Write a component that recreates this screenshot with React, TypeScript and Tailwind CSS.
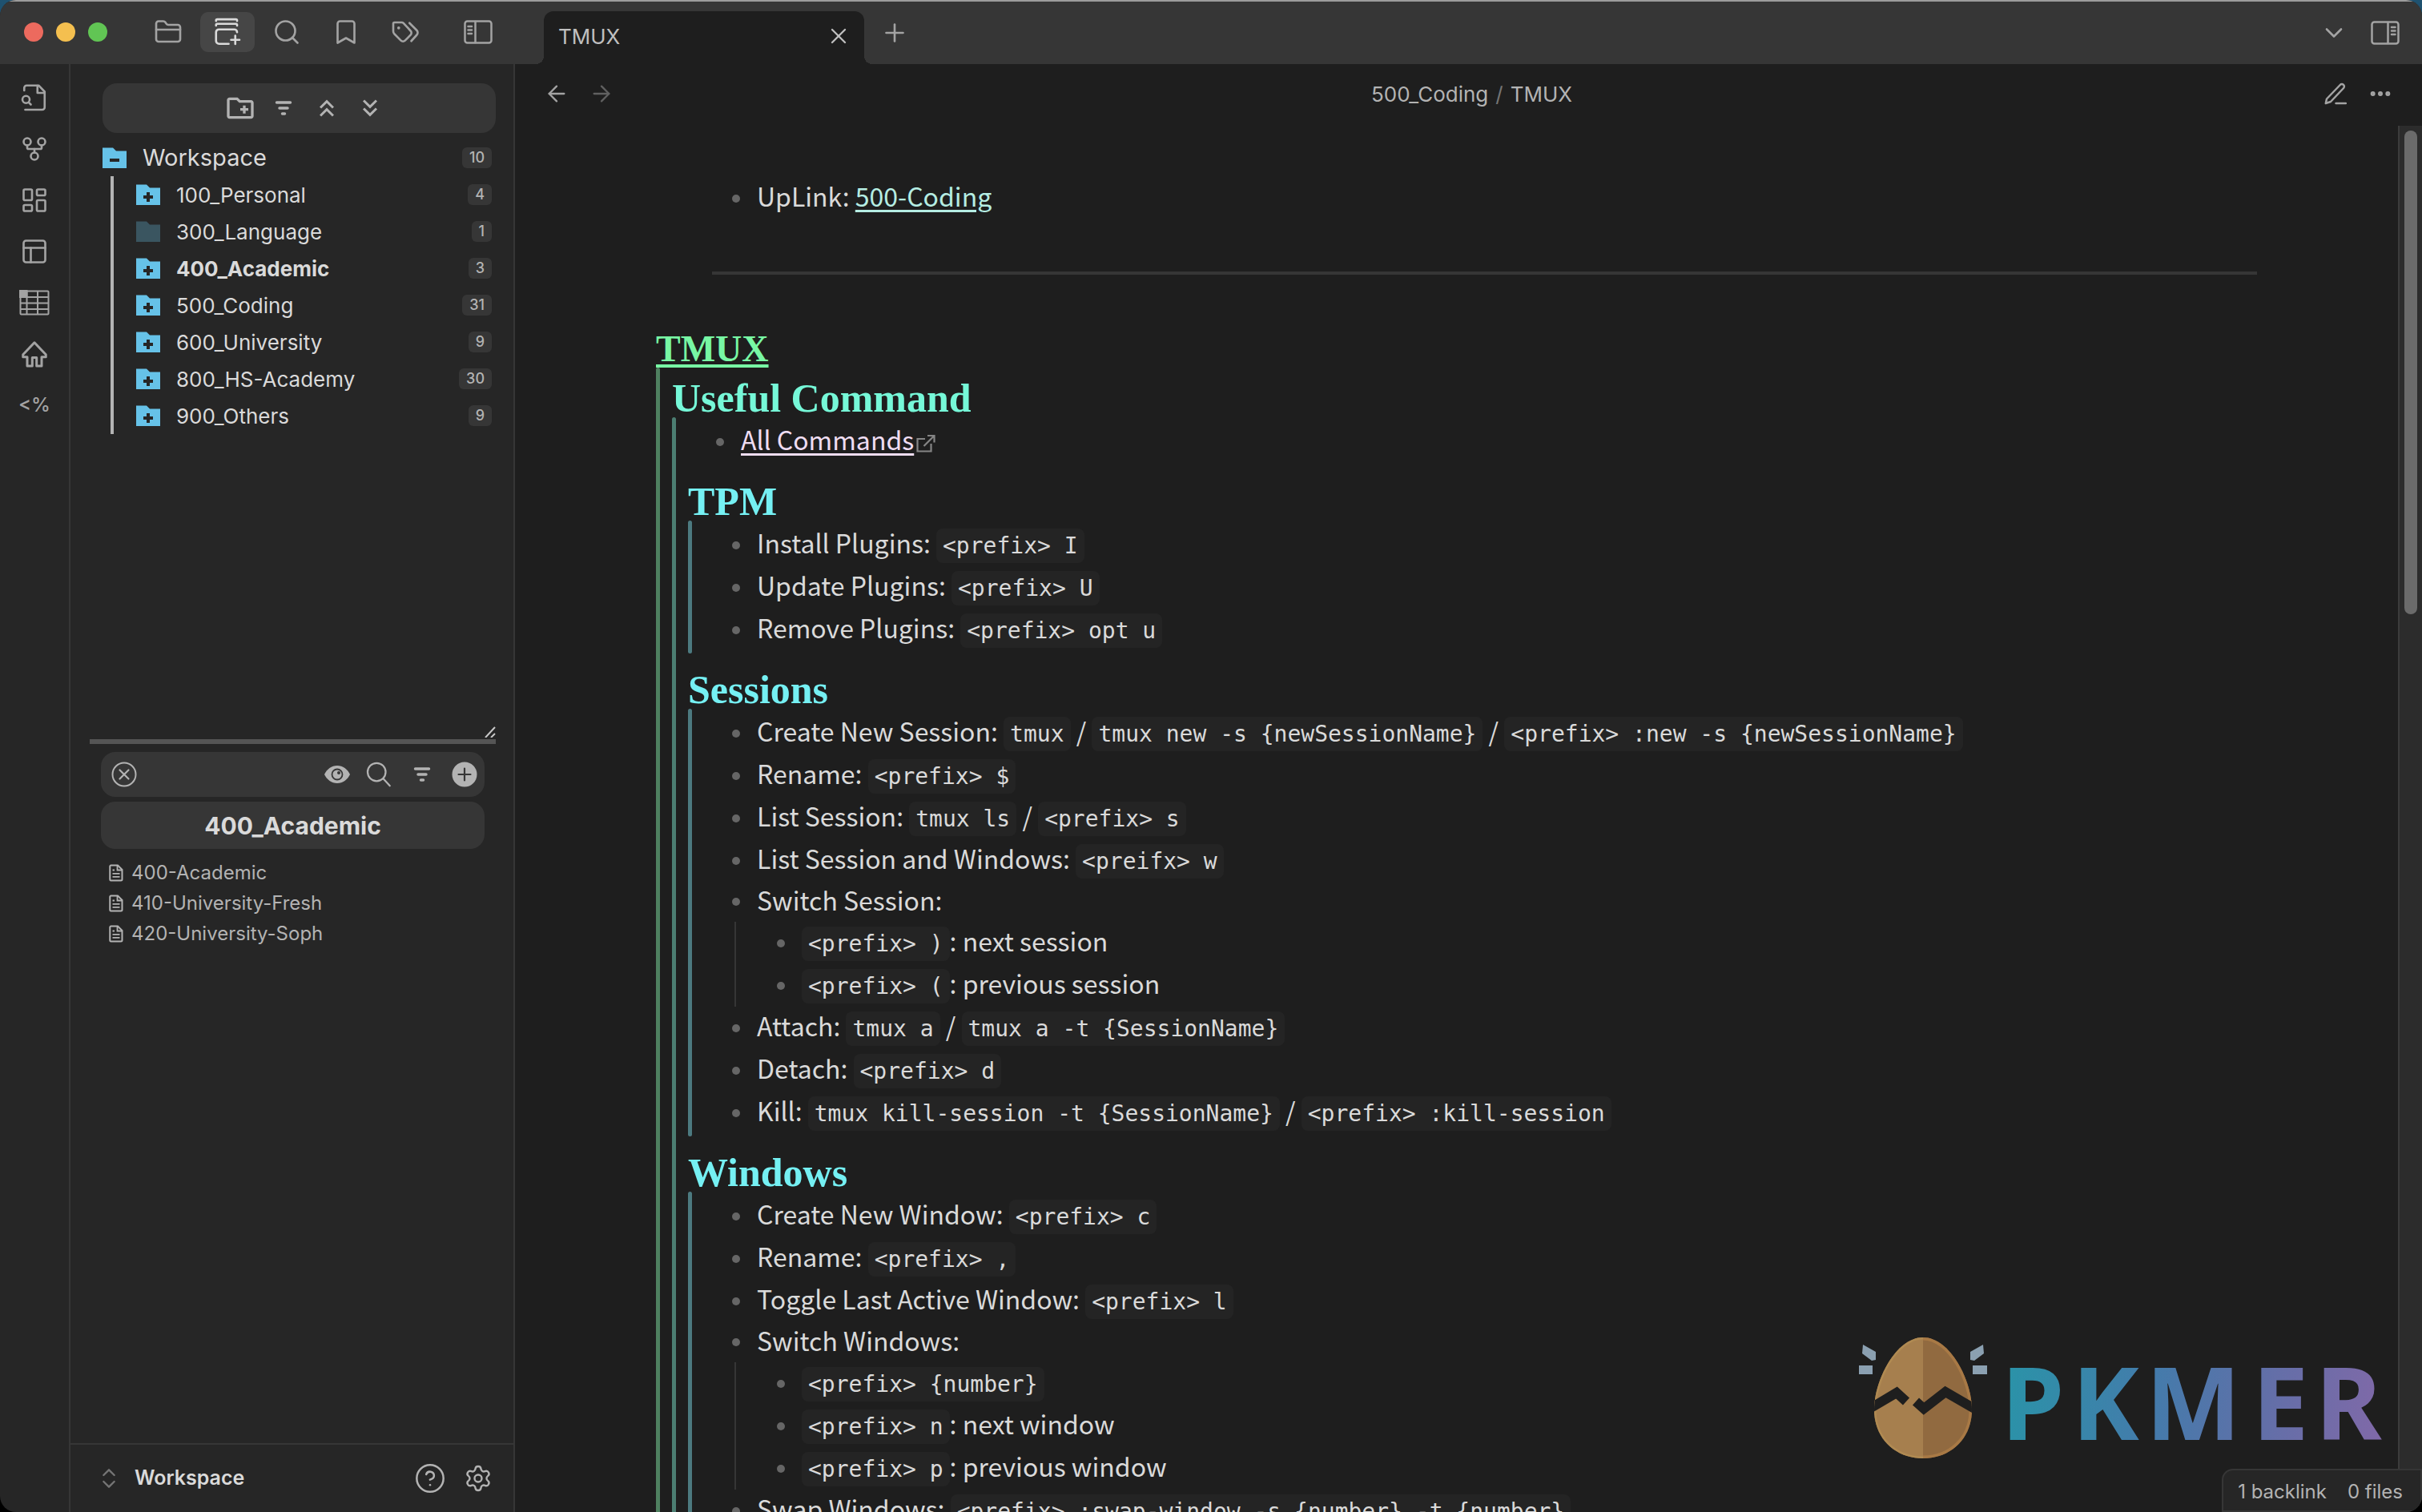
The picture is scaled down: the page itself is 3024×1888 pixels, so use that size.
import type { ReactNode } from "react";
import {
  ArrowLeft,
  ArrowRight,
  Bookmark,
  ChevronDown,
  ChevronsUpDown,
  CircleHelp,
  Ellipsis,
  FolderClosed,
  GitFork,
  LayoutDashboard,
  PanelsTopLeft,
  Plus,
  Search,
  Settings,
  X,
} from "lucide-react";
import {
  MdKeyboardDoubleArrowDown,
  MdKeyboardDoubleArrowUp,
  MdOutlineCreateNewFolder,
} from "react-icons/md";

const folders = [
  { name: "100_Personal", count: 4 },
  { name: "300_Language", count: 1, leaf: true },
  { name: "400_Academic", count: 3, active: true },
  { name: "500_Coding", count: 31 },
  { name: "600_University", count: 9 },
  { name: "800_HS-Academy", count: 30 },
  { name: "900_Others", count: 9 },
];

const files = ["400-Academic", "410-University-Fresh", "420-University-Soph"];

type IconProps = { children: ReactNode; size?: string; width?: number };

function Svg({ children, size = "size-9", width = 1.75 }: IconProps) {
  return (
    <svg
      viewBox="0 0 24 24"
      className={size}
      fill="none"
      stroke="currentColor"
      strokeWidth={width}
      strokeLinecap="round"
      strokeLinejoin="round"
    >
      {children}
    </svg>
  );
}

function StackPlusIcon() {
  return (
    <Svg>
      <path d="M2.500 2.800V2.400a1 1 0 0 1 1-1H19a1 1 0 0 1 1 1v.4" />
      <path d="M2.500 6.600V6.200a1 1 0 0 1 1-1H19a1 1 0 0 1 1 1v.4" />
      <path d="M13 21.800H5A2.500 2.500 0 0 1 2.500 19.300v-7.200a2.300 2.300 0 0 1 2.300-2.300h12.900a2.300 2.300 0 0 1 2.300 2.300" />
      <path d="M18.500 15v7M15 18.500h7" />
    </Svg>
  );
}

function TagsIcon() {
  return (
    <Svg>
      <path d="M9 4H3a1 1 0 0 0-1 1v6.300c0 .9.4 1.800 1 2.400l5.400 5.400a2.400 2.400 0 0 0 3.400 0l4.600-4.700a2.400 2.400 0 0 0 0-3.400L10.500 4.600A2 2 0 0 0 9 4Z" />
      <path d="m15.500 4.500 6 6a2.800 2.800 0 0 1 0 4l-4.500 5" />
      <path d="M6.500 8.500h.01" strokeWidth={2.5} />
    </Svg>
  );
}

function PanelIcon({ right = false }: { right?: boolean }) {
  return (
    <svg
      viewBox="0 0 36 30"
      className="h-[30px] w-9"
      fill="none"
      stroke="currentColor"
      strokeWidth={2.5}
      strokeLinecap="round"
    >
      <rect x="1.5" y="1.5" width="33" height="27" rx="3" />
      {right ? (
        <path d="M21.500 2v26M26 8h4.500M26 12.500h4.500M26 17h4.500" />
      ) : (
        <path d="M14.500 2v26M5.500 8h4.500M5.500 12.500h4.500M5.500 17h4.500" />
      )}
    </svg>
  );
}

function FileSearchIcon() {
  return (
    <Svg>
      <path d="M4.300 22H18.500a2 2 0 0 0 2-2V7L15.500 1.800H5.500a2 2 0 0 0-2 2V6" />
      <path d="M14.500 2v6h6" />
      <circle cx="5" cy="13.5" r="3" />
      <path d="m9 17.700-1.800-1.800" />
    </Svg>
  );
}

function TableIcon() {
  return (
    <svg viewBox="0 0 38 32" className="h-8 w-[38px]" fill="none" stroke="currentColor" strokeWidth={2}>
      <rect x="1.5" y="1.5" width="35" height="29" rx="1" />
      <path d="M9.500 1v30M23 1v30M1 9h36M1 16.500h36M1 24h36" />
      <path d="M1 1h8.500v8H1z" fill="currentColor" />
    </svg>
  );
}

function HomeIcon() {
  return (
    <Svg width={2}>
      <path d="M12 2.500 2.500 12.500v2h3.500v7.500h4.200v-7h3.600v7H18v-7.500h3.500v-2Z" />
    </Svg>
  );
}

function SortIcon() {
  return (
    <svg
      viewBox="0 0 24 24"
      className="size-6"
      stroke="currentColor"
      strokeWidth={3.5}
      strokeLinecap="round"
    >
      <path d="M3.500 5h17M7 12h10M10.500 19h3" />
    </svg>
  );
}

function EyeIcon() {
  return (
    <svg viewBox="0 0 34 22" className="h-[22px] w-[34px]">
      <path
        d="M17 0C10 0 4 4.500 1 11c3 6.500 9 11 16 11s13-4.500 16-11C30 4.500 24 0 17 0Z"
        fill="currentColor"
      />
      <circle cx="17" cy="11" r="6.5" fill="none" stroke="#363636" strokeWidth={1.8} />
      <circle cx="19" cy="9" r="2" fill="#363636" />
    </svg>
  );
}

function CircleXIcon() {
  return (
    <svg viewBox="0 0 32 32" className="size-8" fill="none" stroke="currentColor" strokeWidth={2}>
      <circle cx="16" cy="16" r="14.5" />
      <path d="m10.500 10.500 11 11M21.500 10.500l-11 11" strokeWidth={2.2} strokeLinecap="round" />
    </svg>
  );
}

function CirclePlusIcon() {
  return (
    <svg viewBox="0 0 32 32" className="size-8">
      <circle cx="16" cy="16" r="15.5" fill="currentColor" />
      <path d="M16 8.500v15M8.500 16h15" stroke="#363636" strokeWidth={2.2} strokeLinecap="round" />
    </svg>
  );
}

function FileIcon() {
  return (
    <svg viewBox="0 0 18 22" className="h-[22px] w-[18px]" fill="none" stroke="currentColor" strokeWidth={2}>
      <path d="M2.500 1.500h8.500L16.500 7v12a1.500 1.500 0 0 1-1.500 1.500H2.500A1.200 1.200 0 0 1 1.300 19.300V2.700a1.200 1.200 0 0 1 1.200-1.200Z" />
      <path d="M10.500 1.500v6h6M4.500 7.500h2.500M4.500 11.800h9M4.500 15.800h9" strokeWidth={1.8} />
    </svg>
  );
}

function PenIcon() {
  return (
    <svg
      viewBox="0 0 28 28"
      className="size-7"
      fill="none"
      stroke="currentColor"
      strokeWidth={2.5}
      strokeLinecap="round"
      strokeLinejoin="round"
    >
      <path d="M3 20.500 19.800 3a2.900 2.900 0 0 1 4.300 4L8 24l-6.200 2Z" />
      <path d="M14.500 26H27" />
    </svg>
  );
}

function ExternalIcon() {
  return (
    <svg
      viewBox="0 0 24 24"
      className="ml-[3px] inline size-6 text-[#858585]"
      fill="none"
      stroke="currentColor"
      strokeWidth={2.2}
    >
      <path d="M11 7H1.500v15.500h17V13M9.500 16 22 3.500M14 3h8.500v8.500" />
    </svg>
  );
}

function FolderIcon({ sign, dim = false }: { sign?: "plus" | "minus"; dim?: boolean }) {
  return (
    <svg viewBox="0 0 30 26" className="h-[26px] w-[30px] shrink-0">
      <path d="M0 0.500h13l4 4h13V26H0Z" fill={dim ? "#3a5560" : "#66c2e8"} />
      {sign && <path d="M9 16h12" stroke="#262626" strokeWidth={4} />}
      {sign === "plus" && <path d="M15 10v12" stroke="#262626" strokeWidth={4} />}
    </svg>
  );
}

function Badge({ children }: { children: ReactNode }) {
  return (
    <span className="ml-auto h-[26px] rounded-md bg-[#363636] px-[9px] text-[18px] leading-[26px] font-medium text-[#b3b3b3]">
      {children}
    </span>
  );
}

function TopButton({ label, active, children }: { label: string; active?: boolean; children: ReactNode }) {
  return (
    <button
      aria-label={label}
      className={
        active
          ? "flex h-[50px] w-[68px] items-center justify-center rounded-[10px] bg-[#464646] text-[#dadada]"
          : "flex h-[50px] w-[68px] items-center justify-center text-[#a3a3a3]"
      }
    >
      {children}
    </button>
  );
}

function RibbonButton({ label, children }: { label: string; children: ReactNode }) {
  return (
    <button aria-label={label} className="flex h-16 w-full items-center justify-center">
      {children}
    </button>
  );
}

function Code({ children }: { children: ReactNode }) {
  return (
    <code className="rounded-lg bg-[#242424] px-2 py-[5px] font-['DejaVu_Sans_Mono',monospace] text-[28px] leading-8">
      {children}
    </code>
  );
}

// A list row. Rows that open a nested list sit a little tighter.
function Item({ children, nested }: { children: ReactNode; nested?: ReactNode }) {
  return (
    <li>
      <div className={nested ? "flex items-center gap-[21px] leading-[44px]" : "flex items-center gap-[21px] leading-[47px]"}>
        <span className="size-[10px] shrink-0 rounded-full bg-[#666666]" />
        <div className="pb-[6px] whitespace-nowrap">{children}</div>
      </div>
      {nested && <ul className="ml-[3px] border-l-2 border-[#363636] pl-[51px]">{nested}</ul>}
    </li>
  );
}

function Section({ title, children }: { title: string; children: ReactNode }) {
  return (
    <section className="mt-[21px]">
      <h3 className="font-['Liberation_Serif',serif] text-[50px] leading-[48px] font-bold text-[#75f0f3]">
        {title}
      </h3>
      <div className="flex">
        <div className="w-[5px] shrink-0 rounded-full bg-[#4c7a80]" />
        <ul className="pt-1 pb-[3px] pl-[50px]">{children}</ul>
      </div>
    </section>
  );
}

function Note() {
  return (
    <article className="pt-[64px] pl-[176px] font-['Noto_Sans_CJK_SC',sans-serif] text-[32px] text-[#dadada]">
      <ul className="pl-[95px]">
        <Item>
          UpLink:{" "}
          <a href="#500-coding" className="text-[#b5ede3] underline decoration-[3px] underline-offset-4">
            500-Coding
          </a>
        </Item>
      </ul>
      <hr className="mt-[65px] mr-[176px] ml-[70px] border-t-4 border-[#363636]" />

      <h1 className="mt-[70px] font-['Liberation_Serif',serif] text-[46px] leading-[46px] font-bold text-[#78f7a4] underline decoration-4 underline-offset-4">
        TMUX
      </h1>
      <div className="flex">
        <div className="w-[5px] shrink-0 rounded-t-full bg-[#4f8060]" />
        <section className="pt-[14px] pl-[15px]">
          <h2 className="font-['Liberation_Serif',serif] text-[50px] leading-[48px] font-bold text-[#76f8d8]">
            Useful Command
          </h2>
          <div className="flex">
            <div className="w-[5px] shrink-0 rounded-t-full bg-[#4c7e72]" />
            <div>
              <ul className="pt-1 pb-[3px] pl-[50px]">
                <Item>
                  <a href="#all-commands" className="text-[#efddf2] underline decoration-[3px] underline-offset-4">
                    All Commands
                  </a>
                  <ExternalIcon />
                </Item>
              </ul>
              <div className="pl-[15px]">
                <Section title="TPM">
                  <Item>Install Plugins: <Code>{"<prefix> I"}</Code></Item>
                  <Item>Update Plugins: <Code>{"<prefix> U"}</Code></Item>
                  <Item>Remove Plugins: <Code>{"<prefix> opt u"}</Code></Item>
                </Section>
                <Section title="Sessions">
                  <Item>
                    Create New Session: <Code>tmux</Code> / <Code>{"tmux new -s {newSessionName}"}</Code> /{" "}
                    <Code>{"<prefix> :new -s {newSessionName}"}</Code>
                  </Item>
                  <Item>Rename: <Code>{"<prefix> $"}</Code></Item>
                  <Item>List Session: <Code>tmux ls</Code> / <Code>{"<prefix> s"}</Code></Item>
                  <Item>List Session and Windows: <Code>{"<preifx> w"}</Code></Item>
                  <Item
                    nested={
                      <>
                        <Item><Code>{"<prefix> )"}</Code>: next session</Item>
                        <Item><Code>{"<prefix> ("}</Code>: previous session</Item>
                      </>
                    }
                  >
                    Switch Session:
                  </Item>
                  <Item>Attach: <Code>tmux a</Code> / <Code>{"tmux a -t {SessionName}"}</Code></Item>
                  <Item>Detach: <Code>{"<prefix> d"}</Code></Item>
                  <Item>
                    Kill: <Code>{"tmux kill-session -t {SessionName}"}</Code> / <Code>{"<prefix> :kill-session"}</Code>
                  </Item>
                </Section>
                <Section title="Windows">
                  <Item>Create New Window: <Code>{"<prefix> c"}</Code></Item>
                  <Item>Rename: <Code>{"<prefix> ,"}</Code></Item>
                  <Item>Toggle Last Active Window: <Code>{"<prefix> l"}</Code></Item>
                  <Item
                    nested={
                      <>
                        <Item><Code>{"<prefix> {number}"}</Code></Item>
                        <Item><Code>{"<prefix> n"}</Code>: next window</Item>
                        <Item><Code>{"<prefix> p"}</Code>: previous window</Item>
                      </>
                    }
                  >
                    Switch Windows:
                  </Item>
                  <Item>Swap Windows: <Code>{"<prefix> :swap-window -s {number} -t {number}"}</Code></Item>
                </Section>
              </div>
            </div>
          </div>
        </section>
      </div>
    </article>
  );
}

function Logo() {
  return (
    <svg viewBox="0 0 664 160" className="absolute right-[44px] bottom-[62px] h-40 w-[664px] overflow-visible">
      <defs>
        <linearGradient id="word" gradientUnits="userSpaceOnUse" x1="190" x2="660" y1="0" y2="40">
          <stop offset="0" stopColor="#2a93a8" />
          <stop offset="0.4" stopColor="#447bab" />
          <stop offset="0.7" stopColor="#626fa8" />
          <stop offset="1" stopColor="#7f69a8" />
        </linearGradient>
        <clipPath id="egg">
          <path d="M85 4c34 0 61 54 61 90 0 37-27 61-61 61S24 131 24 94C24 58 51 4 85 4Z" />
        </clipPath>
      </defs>
      <g clipPath="url(#egg)">
        <path d="M0 0h85v160H0z" fill="#a67f4e" />
        <path d="M85 0h85v160H85z" fill="#916a40" />
        <path d="M85 4c34 0 61 54 61 90 0 37-27 61-61 61" fill="none" stroke="#a87945" strokeWidth={7} />
        <path d="M85 4C51 4 24 58 24 94c0 37 27 61 61 61" fill="none" stroke="#b08a52" strokeWidth={5} />
        <path d="m20 92 32-19 12 11M76 84l10 9 27-21 38 22" fill="none" stroke="#1e1e1e" strokeWidth={12} />
      </g>
      <g fill="#8ba0b1">
        <path d="m10 13 16 9v10l-5 1-12-9ZM5 39h17v11H5ZM160 13l-16 9v10l5 1 12-9ZM147 39h18v11h-18Z" />
      </g>
      <text
        x="183 271 363 496 575"
        y="132"
        fill="url(#word)"
        className="font-['Noto_Sans',sans-serif] text-[126px] font-bold"
      >
        PKMER
      </text>
    </svg>
  );
}

export default function App() {
  return (
    <div className="h-screen bg-linear-to-b from-[#1f5270] to-black font-['Inter',sans-serif] text-[#b3b3b3]">
      <div className="relative flex h-full flex-col overflow-hidden rounded-[20px] bg-[#262626]">
        <header className="flex h-20 shrink-0 border-t-2 border-[#9c9c9c] bg-[#363636] text-[#a3a3a3]">
          <div className="flex w-[643px] shrink-0 items-center pb-[2px] pl-[30px]">
            <div className="flex w-[146px] gap-4">
              <span className="size-6 rounded-full bg-[#ec6a5e]" />
              <span className="size-6 rounded-full bg-[#f4bf4f]" />
              <span className="size-6 rounded-full bg-[#61c554]" />
            </div>
            <nav className="flex gap-[6px]">
              <TopButton label="Files"><FolderClosed className="size-9" strokeWidth={1.75} /></TopButton>
              <TopButton label="File tree" active><StackPlusIcon /></TopButton>
              <TopButton label="Search"><Search className="size-9" strokeWidth={1.75} /></TopButton>
              <TopButton label="Bookmarks"><Bookmark className="size-9" strokeWidth={1.75} /></TopButton>
              <TopButton label="Tags"><TagsIcon /></TopButton>
            </nav>
            <button aria-label="Toggle left sidebar" className="mr-7 ml-auto">
              <PanelIcon />
            </button>
          </div>
          <div className="flex grow items-center">
            <div className="mt-3 ml-[26px] flex shrink-0 items-end self-start">
              {/* flared feet on both sides of the tab */}
              <span className="size-[10px] bg-[radial-gradient(circle_at_top_left,#363636_10px,#1e1e1e_10px)]" />
              <div className="flex h-[66px] w-[400px] items-center justify-between rounded-t-[12px] bg-[#1e1e1e] pr-4 pb-1 pl-[18px]">
                <span className="text-[26px] text-[#c0c0c0]">TMUX</span>
                <button aria-label="Close tab"><X className="size-8 text-[#c0c0c0]" strokeWidth={1.75} /></button>
              </div>
              <span className="size-[10px] bg-[radial-gradient(circle_at_top_right,#363636_10px,#1e1e1e_10px)]" />
            </div>
            <button aria-label="New tab" className="ml-[10px]"><Plus className="size-9" strokeWidth={1.75} /></button>
            <button aria-label="Tab list" className="mr-7 ml-auto"><ChevronDown className="size-9" strokeWidth={1.75} /></button>
            <button aria-label="Toggle right sidebar" className="mr-7"><PanelIcon right /></button>
          </div>
        </header>

        <div className="flex min-h-0 grow">
          <nav className="flex w-[88px] shrink-0 flex-col border-r-2 border-[#363636] pt-[10px] text-[#a3a3a3]">
            <RibbonButton label="Quick switcher"><FileSearchIcon /></RibbonButton>
            <RibbonButton label="Graph view"><GitFork className="size-9" strokeWidth={1.75} /></RibbonButton>
            <RibbonButton label="Canvas"><LayoutDashboard className="size-9" strokeWidth={1.75} /></RibbonButton>
            <RibbonButton label="Layouts"><PanelsTopLeft className="size-9" strokeWidth={1.75} /></RibbonButton>
            <RibbonButton label="Table"><TableIcon /></RibbonButton>
            <RibbonButton label="Home"><HomeIcon /></RibbonButton>
            <RibbonButton label="Templates"><span className="text-[24px] font-medium">&lt;%</span></RibbonButton>
          </nav>

          <aside className="flex w-[555px] shrink-0 flex-col border-r-2 border-[#363636]">
            <div className="mr-[22px] ml-6 flex h-[849px] flex-col border-b-[6px] border-[#555555] pt-6">
              <div className="ml-4 flex h-[62px] shrink-0 items-center justify-center gap-[14px] rounded-[18px] bg-[#363636] pl-[14px]">
                <button aria-label="New folder" className="flex w-10 justify-center"><MdOutlineCreateNewFolder className="size-10" /></button>
                <button aria-label="Sort" className="flex w-10 justify-center"><SortIcon /></button>
                <button aria-label="Collapse all" className="flex w-10 justify-center"><MdKeyboardDoubleArrowUp className="size-9" /></button>
                <button aria-label="Expand all" className="flex w-10 justify-center"><MdKeyboardDoubleArrowDown className="size-9" /></button>
              </div>
              <div className="mt-2 ml-4 pr-[5px] text-[#dadada]">
                <button className="flex h-[46px] w-full items-center text-[29px]">
                  <FolderIcon sign="minus" />
                  <span className="ml-5">Workspace</span>
                  <Badge>10</Badge>
                </button>
                <ul className="ml-[10px] border-l-4 border-[#b3b3b3] pl-7">
                  {folders.map((folder) => (
                    <li key={folder.name}>
                      <button className="flex h-[46px] w-full items-center text-[26px]">
                        <FolderIcon sign={folder.leaf ? undefined : "plus"} dim={folder.leaf} />
                        <span className={folder.active ? "ml-5 font-bold" : "ml-5"}>{folder.name}</span>
                        <Badge>{folder.count}</Badge>
                      </button>
                    </li>
                  ))}
                </ul>
              </div>
              <svg viewBox="0 0 14 14" className="mt-auto mb-[2px] ml-auto size-[14px]" stroke="#c8c8c8" strokeWidth={2}>
                <path d="M1 14 13 1M8 14l5-5" />
              </svg>
            </div>

            <div className="mr-9 ml-[38px] flex flex-col">
              <div className="mt-[10px] flex h-14 items-center rounded-[18px] bg-[#363636] pr-[5px] pl-[13px]">
                <button aria-label="Close list"><CircleXIcon /></button>
                <div className="ml-auto flex gap-[13px]">
                  <button aria-label="Preview" className="flex w-10 items-center justify-center"><EyeIcon /></button>
                  <button aria-label="Search files" className="flex w-10 items-center justify-center">
                    <Svg width={1.5}>
                      <circle cx="9.5" cy="10" r="7.5" />
                      <path d="m15 15.500 5.500 6" />
                    </Svg>
                  </button>
                  <button aria-label="Sort files" className="flex w-10 items-center justify-center"><SortIcon /></button>
                  <button aria-label="New file" className="flex w-10 items-center justify-center"><CirclePlusIcon /></button>
                </div>
              </div>
              <h2 className="mt-[6px] h-[59px] rounded-[18px] bg-[#363636] text-center text-[30px] leading-[60px] font-bold text-[#dadada]">
                400_Academic
              </h2>
              <ul className="mt-[11px] pl-[10px]">
                {files.map((file) => (
                  <li key={file}>
                    <button className="flex h-[38px] items-center gap-[10px] text-[24px]">
                      <FileIcon />
                      {file}
                    </button>
                  </li>
                ))}
              </ul>
            </div>

            <footer className="mt-auto flex h-[86px] items-center border-t-2 border-[#363636] pr-6 pl-8">
              <ChevronsUpDown className="size-8 text-[#757575]" strokeWidth={1.75} />
              <span className="ml-4 text-[25px] font-semibold text-[#dadada]">Workspace</span>
              <button aria-label="Help" className="ml-auto"><CircleHelp className="size-10" strokeWidth={1.5} /></button>
              <button aria-label="Settings" className="ml-5"><Settings className="size-10 p-[2px]" strokeWidth={1.6} /></button>
            </footer>
          </aside>

          <main className="flex min-w-0 grow flex-col bg-[#1e1e1e]">
            <div className="grid h-[77px] shrink-0 grid-cols-[1fr_auto_1fr] items-center px-9 pb-[3px] text-[#a3a3a3]">
              <div className="flex gap-6">
                <button aria-label="Back"><ArrowLeft className="size-8" strokeWidth={1.75} /></button>
                <button aria-label="Forward"><ArrowRight className="size-8 text-[#606060]" strokeWidth={1.75} /></button>
              </div>
              <div className="flex gap-[9px] pl-2 text-[26px] text-[#b3b3b3]">
                <a href="#500-coding">500_Coding</a>
                <span className="text-[#757575]">/</span>
                <span>TMUX</span>
              </div>
              <div className="flex items-center justify-end gap-[26px]">
                <button aria-label="Edit"><PenIcon /></button>
                <button aria-label="More options"><Ellipsis className="size-8" strokeWidth={2.5} /></button>
              </div>
            </div>
            <div className="flex min-h-0 grow">
              <div className="min-w-0 grow overflow-hidden">
                <Note />
              </div>
              <div className="w-[30px] shrink-0 border-l-2 border-[#3c3c3c] bg-[#2c2c2c] px-[6px] pt-[6px]">
                <div className="h-[35%] w-4 rounded-full bg-[#6b6b6b]" />
              </div>
            </div>
          </main>
        </div>

        <Logo />
        <div className="absolute right-0 bottom-0 flex h-[54px] items-center gap-[26px] rounded-tl-[14px] border-2 border-[#363636] bg-[#262626] pt-[3px] pr-[22px] pl-[18px] text-[24px]">
          <span>1 backlink</span>
          <span>0 files</span>
        </div>
      </div>
    </div>
  );
}
